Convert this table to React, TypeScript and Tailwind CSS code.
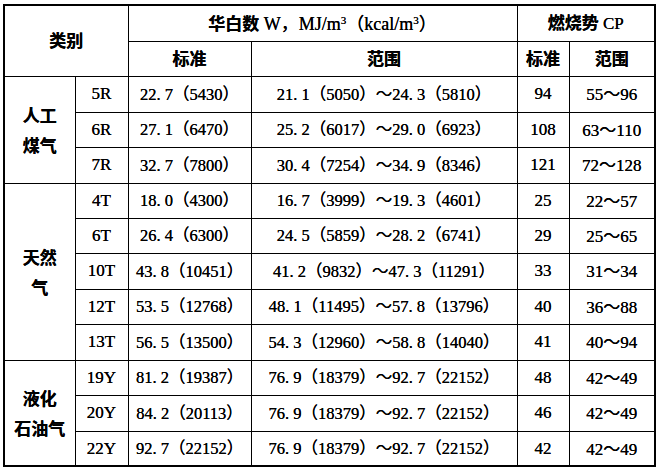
import React from "react";

const cjkFont = "font-['Noto_Sans_CJK_SC',sans-serif]";

const Txt = ({ t }: { t: string }) => (
  <>
    {Array.from(t).map((c, i) => {
      if (c === ".")
        return (
          <span key={i} className="inline-block w-[0.5em] text-left">
            .
          </span>
        );
      if (c === "（")
        return (
          <span key={i} className={`inline-block w-[1em] text-right ${cjkFont}`}>
            （
          </span>
        );
      if (c === "）")
        return (
          <span key={i} className={`inline-block w-[1em] text-left ${cjkFont}`}>
            ）
          </span>
        );
      if (c === "～")
        return (
          <span key={i} className={`inline-block w-[1em] text-center ${cjkFont}`}>
            ～
          </span>
        );
      if (c === "，")
        return (
          <span key={i} className={`inline-block w-[1em] text-left ${cjkFont}`}>
            ，
          </span>
        );
      return <React.Fragment key={i}>{c}</React.Fragment>;
    })}
  </>
);

const Cjk = ({ children }: { children: React.ReactNode }) => (
  <span className={`${cjkFont} font-semibold text-[17px]`}>{children}</span>
);

type Row = [string, string, string, string, string];

const rows: Row[] = [
  ["5R", "22.7（5430）", "21.1（5050）～24.3（5810）", "94", "55～96"],
  ["6R", "27.1（6470）", "25.2（6017）～29.0（6923）", "108", "63～110"],
  ["7R", "32.7（7800）", "30.4（7254）～34.9（8346）", "121", "72～128"],
  ["4T", "18.0（4300）", "16.7（3999）～19.3（4601）", "25", "22～57"],
  ["6T", "26.4（6300）", "24.5（5859）～28.2（6741）", "29", "25～65"],
  ["10T", "43.8（10451）", "41.2（9832）～47.3（11291）", "33", "31～34"],
  ["12T", "53.5（12768）", "48.1（11495）～57.8（13796）", "40", "36～88"],
  ["13T", "56.5（13500）", "54.3（12960）～58.8（14040）", "41", "40～94"],
  ["19Y", "81.2（19387）", "76.9（18379）～92.7（22152）", "48", "42～49"],
  ["20Y", "84.2（20113）", "76.9（18379）～92.7（22152）", "46", "42～49"],
  ["22Y", "92.7（22152）", "76.9（18379）～92.7（22152）", "42", "42～49"],
];

const groups: Record<number, { span: number; l1: string; l2: string }> = {
  0: { span: 3, l1: "人工", l2: "煤气" },
  3: { span: 5, l1: "天然", l2: "气" },
  8: { span: 3, l1: "液化", l2: "石油气" },
};

const heights = [36, 35, 36, 35, 35, 36, 35, 36, 35, 36, 35];

const td = "border border-black text-center align-middle p-0";

export default function App() {
  return (
    <div className="w-[656px] h-[472px] bg-white pt-[4px] pl-[3px] font-['Liberation_Serif','Noto_Sans_CJK_SC',serif] text-[16.5px] text-black">
      <table className="border-collapse table-fixed border-2 border-black w-[651px] [text-shadow:0_0_0.5px_#000]">
        <colgroup>
          <col className="w-[71px]" />
          <col className="w-[53px]" />
          <col className="w-[123px]" />
          <col className="w-[266px]" />
          <col className="w-[52px]" />
          <col className="w-[86px]" />
        </colgroup>
        <thead>
          <tr className="h-[36px]">
            <td className={td} colSpan={2} rowSpan={2}>
              <Cjk>类别</Cjk>
            </td>
            <td className={td} colSpan={2}>
              <span className="text-[18px]">
                <Cjk>华白数</Cjk> W<Txt t="，" />
                MJ/m<sup className="text-[11px]">3</sup>
                <Txt t="（" />
                kcal/m<sup className="text-[11px]">3</sup>
                <Txt t="）" />
              </span>
            </td>
            <td className={td} colSpan={2}>
              <span className="text-[17px]">
                <Cjk>燃烧势</Cjk> CP
              </span>
            </td>
          </tr>
          <tr className="h-[35px]">
            <td className={td}>
              <Cjk>标准</Cjk>
            </td>
            <td className={td}>
              <Cjk>范围</Cjk>
            </td>
            <td className={td}>
              <Cjk>标准</Cjk>
            </td>
            <td className={td}>
              <Cjk>范围</Cjk>
            </td>
          </tr>
        </thead>
        <tbody>
          {rows.map((r, i) => {
            const g = groups[i];
            return (
              <tr key={r[0]} style={{ height: heights[i] }}>
                {g && (
                  <td className={td} rowSpan={g.span}>
                    <div className={`${cjkFont} font-semibold text-[17px] leading-[30px]`}>
                      <div>{g.l1}</div>
                      <div>{g.l2}</div>
                    </div>
                  </td>
                )}
                <td className={`${td} text-[17px]`}>{r[0]}</td>
                <td className={td}>
                  <Txt t={r[1]} />
                </td>
                <td className={td}>
                  <Txt t={r[2]} />
                </td>
                <td className={`${td} text-[17px]`}>{r[3]}</td>
                <td className={`${td} text-[17px]`}>
                  <Txt t={r[4]} />
                </td>
              </tr>
            );
          })}
        </tbody>
      </table>
    </div>
  );
}
